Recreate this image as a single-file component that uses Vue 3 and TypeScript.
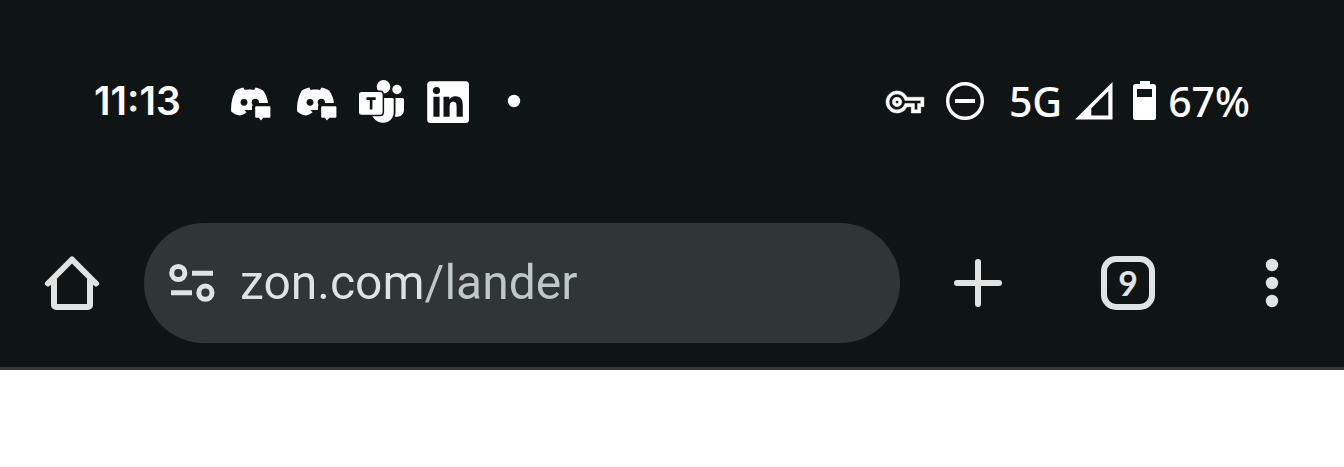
<script setup lang="ts">
import { ref } from 'vue'

const address = ref<string>('zon.com/lander')
const openTabs = ref<number>(9)
const clock = '11:13'
const network = '5G'
const charge = '67%'
</script>

<template>
  <div class="screen">
    <header class="chrome">
      <div class="status">
        <time class="clock">{{ clock }}</time>
        <div class="notices">
          <svg v-for="n in 2" :key="n" viewBox="0 0 48 48" aria-hidden="true">
            <path fill="#fff" d="M5.200 34.400C4.700 27.500 6 19.800 9.800 13.600c2.300-1.600 4.800-2.700 7.500-3.200l1.500 2.500c3-.5 6.200-.5 9.200 0l1.500-2.500c2.700.5 5.300 1.600 7.600 3.200 2.800 3.900 4.600 8.200 5 13.400L27 33l-8.600 0 2.200 2.200c-1.700 1.500-4 2.800-6.600 3.400-3.300-.6-6.200-2.200-8.800-4.200z" />
            <circle cx="18" cy="25.300" r="3.400" fill="#0f1514" />
            <circle cx="29.300" cy="25.300" r="3.600" fill="#0f1514" />
            <path fill="#fff" stroke="#0f1514" stroke-width="6.600" paint-order="stroke" d="M30.200 29.200h13.200a1 1 0 0 1 1 1v9.600a1 1 0 0 1-1 1h-6l-2.600 2.600-1.800-2.600h-2.800a1 1 0 0 1-1-1v-9.600a1 1 0 0 1 1-1z" />
          </svg>
          <svg viewBox="0 0 48 48" aria-hidden="true">
            <g fill="#fff">
              <circle cx="25.500" cy="9.700" r="6.800" />
              <circle cx="39" cy="12.500" r="4.700" />
              <path d="M14.500 21h19.700a1.500 1.500 0 0 1 1.500 1.500v12.700c0 6-4.600 10.500-10.500 10.500-4.700 0-8.700-2.500-10.700-6.500z" />
              <path d="M37.500 21h7a1.500 1.500 0 0 1 1.500 1.500v10.300c0 4.200-2.900 7-7 7-.8 0-1.600-.1-2.300-.4.600-1.300.8-2.700.8-4.200z" />
              <rect x="1" y="15" width="23.600" height="22.800" rx="2.500" stroke="#0f1514" stroke-width="3" paint-order="stroke" />
            </g>
            <path fill="none" stroke="#0f1514" stroke-width="2.600" d="M8.500 21.600h9.200M13.100 21.600v10.800" />
          </svg>
          <svg viewBox="0 0 48 48" aria-hidden="true">
            <path transform="translate(3.200 4.200) scale(1.740)" fill="#fff" d="M20.447 20.452h-3.554v-5.569c0-1.328-.027-3.037-1.852-3.037-1.853 0-2.136 1.445-2.136 2.939v5.667H9.351V9h3.414v1.561h.046c.477-.9 1.637-1.850 3.370-1.850 3.601 0 4.267 2.370 4.267 5.455v6.286zM5.337 7.433a2.062 2.062 0 0 1-2.063-2.065 2.064 2.064 0 1 1 2.063 2.065zm1.782 13.019H3.555V9h3.564v11.452zM22.225 0H1.771C.792 0 0 .774 0 1.729v20.542C0 23.227.792 24 1.771 24h20.451C23.200 24 24 23.227 24 22.271V1.729C24 .774 23.200 0 22.222 0h.003z" />
          </svg>
          <svg viewBox="0 0 48 48" aria-hidden="true">
            <circle cx="24" cy="24" r="6.200" fill="#fff" />
          </svg>
        </div>
        <div class="system">
          <svg class="key" viewBox="0 0 40 40" aria-hidden="true">
            <g transform="translate(1 2) scale(1.580)" fill="#fff" stroke="#fff" stroke-width="0.300">
              <path d="M22 19h-6v-4h-2.680c-1.140 2.420-3.600 4-6.320 4-3.860 0-7-3.140-7-7s3.140-7 7-7c2.720 0 5.170 1.580 6.320 4H24v6h-2v4zm-4-2h2v-4h2v-2H11.940l-.230-.670C11.010 8.340 9.110 7 7 7c-2.760 0-5 2.240-5 5s2.240 5 5 5c2.110 0 4.010-1.340 4.710-3.330l.230-.670H18v4z" />
              <path fill-rule="evenodd" d="M7 15a3 3 0 1 1 0-6 3 3 0 0 1 0 6zm0-4a1 1 0 1 0 0 2 1 1 0 0 0 0-2z" />
            </g>
          </svg>
          <svg class="quiet" viewBox="0 0 40 40" aria-hidden="true">
            <circle cx="20" cy="20" r="17.300" fill="none" stroke="#fff" stroke-width="3.400" />
            <path d="M10 20h20" stroke="#fff" stroke-width="4" />
          </svg>
          <span class="network">{{ network }}</span>
          <svg class="signal" viewBox="0 0 40 40" aria-hidden="true">
            <path fill="#fff" fill-rule="evenodd" d="M1 38.500 38.500 1v37.500zM17.300 34.500h17V10.200l-17 17z" />
          </svg>
          <svg class="battery" viewBox="0 0 26 40" aria-hidden="true">
            <path fill="#fff" fill-rule="evenodd" d="M8 0h10v3h3.500A2.500 2.500 0 0 1 24 5.500v31a2.500 2.500 0 0 1-2.500 2.500h-18A2.500 2.500 0 0 1 1 36.500v-31A2.500 2.500 0 0 1 3.500 3H8zM5 8v8h15V8z" />
          </svg>
          <span>{{ charge }}</span>
        </div>
      </div>

      <nav class="toolbar" aria-label="Browser">
        <button type="button" class="tool" aria-label="Home">
          <svg viewBox="0 0 60 60" aria-hidden="true">
            <path fill="none" stroke="currentColor" stroke-width="6" stroke-linecap="round" stroke-linejoin="round" d="M6 30.500 30 6.500l24 24M12 27v25a2 2 0 0 0 2 2h32a2 2 0 0 0 2-2V27" />
          </svg>
        </button>
        <div class="omnibox">
          <button type="button" class="site" aria-label="Site information">
            <svg viewBox="0 0 48 48" aria-hidden="true">
              <g fill="none" stroke="currentColor" stroke-width="5">
                <circle cx="10.300" cy="14" r="6.600" />
                <circle cx="37.400" cy="33.700" r="6.600" />
                <path d="M24 14.300h21M3 33.700h21" />
              </g>
            </svg>
          </button>
          <input v-model="address" class="address" type="text" inputmode="url" aria-label="Address" spellcheck="false">
        </div>
        <button type="button" class="tool add" aria-label="New tab">
          <svg viewBox="0 0 60 60" aria-hidden="true">
            <path stroke="currentColor" stroke-width="6" stroke-linecap="round" d="M30 9v42M9 30h42" />
          </svg>
        </button>
        <button type="button" class="tool" aria-label="Open tabs">
          <span class="count">{{ openTabs }}</span>
        </button>
        <button type="button" class="tool" aria-label="Menu">
          <svg viewBox="0 0 60 60" aria-hidden="true">
            <g fill="currentColor">
              <circle cx="30" cy="12" r="6.200" />
              <circle cx="30" cy="30" r="6.200" />
              <circle cx="30" cy="48" r="6.200" />
            </g>
          </svg>
        </button>
      </nav>
    </header>
    <main class="page"></main>
  </div>
</template>

<style>
body {
  margin: 0;
  background: #fff;
}
</style>

<style scoped>
.screen {
  display: flex;
  flex-direction: column;
  min-height: 100vh;
  font-family: Roboto, "Noto Sans", sans-serif;
}

.chrome {
  background: #0f1514;
  border-bottom: 3px solid #343837;
}

.status {
  display: flex;
  align-items: center;
  padding: 77px 94px;
  color: #fff;
  font-family: "Noto Sans", sans-serif;
  font-size: 41px;
  font-weight: 500;
  line-height: 48px;
}

.status svg {
  display: block;
  flex: none;
  height: 40px;
}

.clock {
  min-width: 132px;
  font-family: Inter, sans-serif;
  font-size: 39px;
  font-weight: 600;
}

.notices {
  display: flex;
  gap: 18px;
}

.notices svg {
  width: 48px;
  height: 48px;
}

.system {
  display: flex;
  align-items: center;
  margin-left: auto;
}

.key,
.quiet,
.signal {
  width: 40px;
}

.quiet {
  margin-left: 20px;
}

.network {
  margin-left: 24px;
}

.signal {
  margin-left: 12px;
}

.battery {
  width: 26px;
  margin: 0 10px 0 18px;
}

.toolbar {
  display: flex;
  align-items: center;
  padding: 21px 0 24px;
  color: #dfe4e3;
}

button {
  display: flex;
  align-items: center;
  justify-content: center;
  flex: none;
  padding: 0;
  border: 0;
  background: none;
  color: inherit;
  cursor: pointer;
}

.tool {
  width: 144px;
  height: 120px;
}

.add {
  width: 156px;
}

.tool svg {
  width: 60px;
  height: 60px;
}

.omnibox {
  display: flex;
  flex: 1;
  align-items: center;
  gap: 24px;
  min-width: 0;
  height: 120px;
  padding: 0 24px;
  box-sizing: border-box;
  border-radius: 60px;
  background: #2f3635;
}

.site svg {
  width: 48px;
  height: 48px;
}

.address {
  flex: 1;
  min-width: 0;
  height: 60px;
  padding: 0;
  border: 0;
  outline: 0;
  background: linear-gradient(90deg, #dfe4e3 184px, #bec9c7 184px);
  background-clip: text;
  -webkit-background-clip: text;
  color: transparent;
  caret-color: #dfe4e3;
  font: 400 48px/60px Roboto, "Noto Sans", sans-serif;
}

.count {
  display: flex;
  align-items: center;
  justify-content: center;
  box-sizing: border-box;
  width: 54px;
  height: 54px;
  border: 6px solid currentColor;
  border-radius: 15px;
  font: 700 34px/40px Lato, sans-serif;
}

.page {
  flex: 1;
  background: #fff;
}
</style>
